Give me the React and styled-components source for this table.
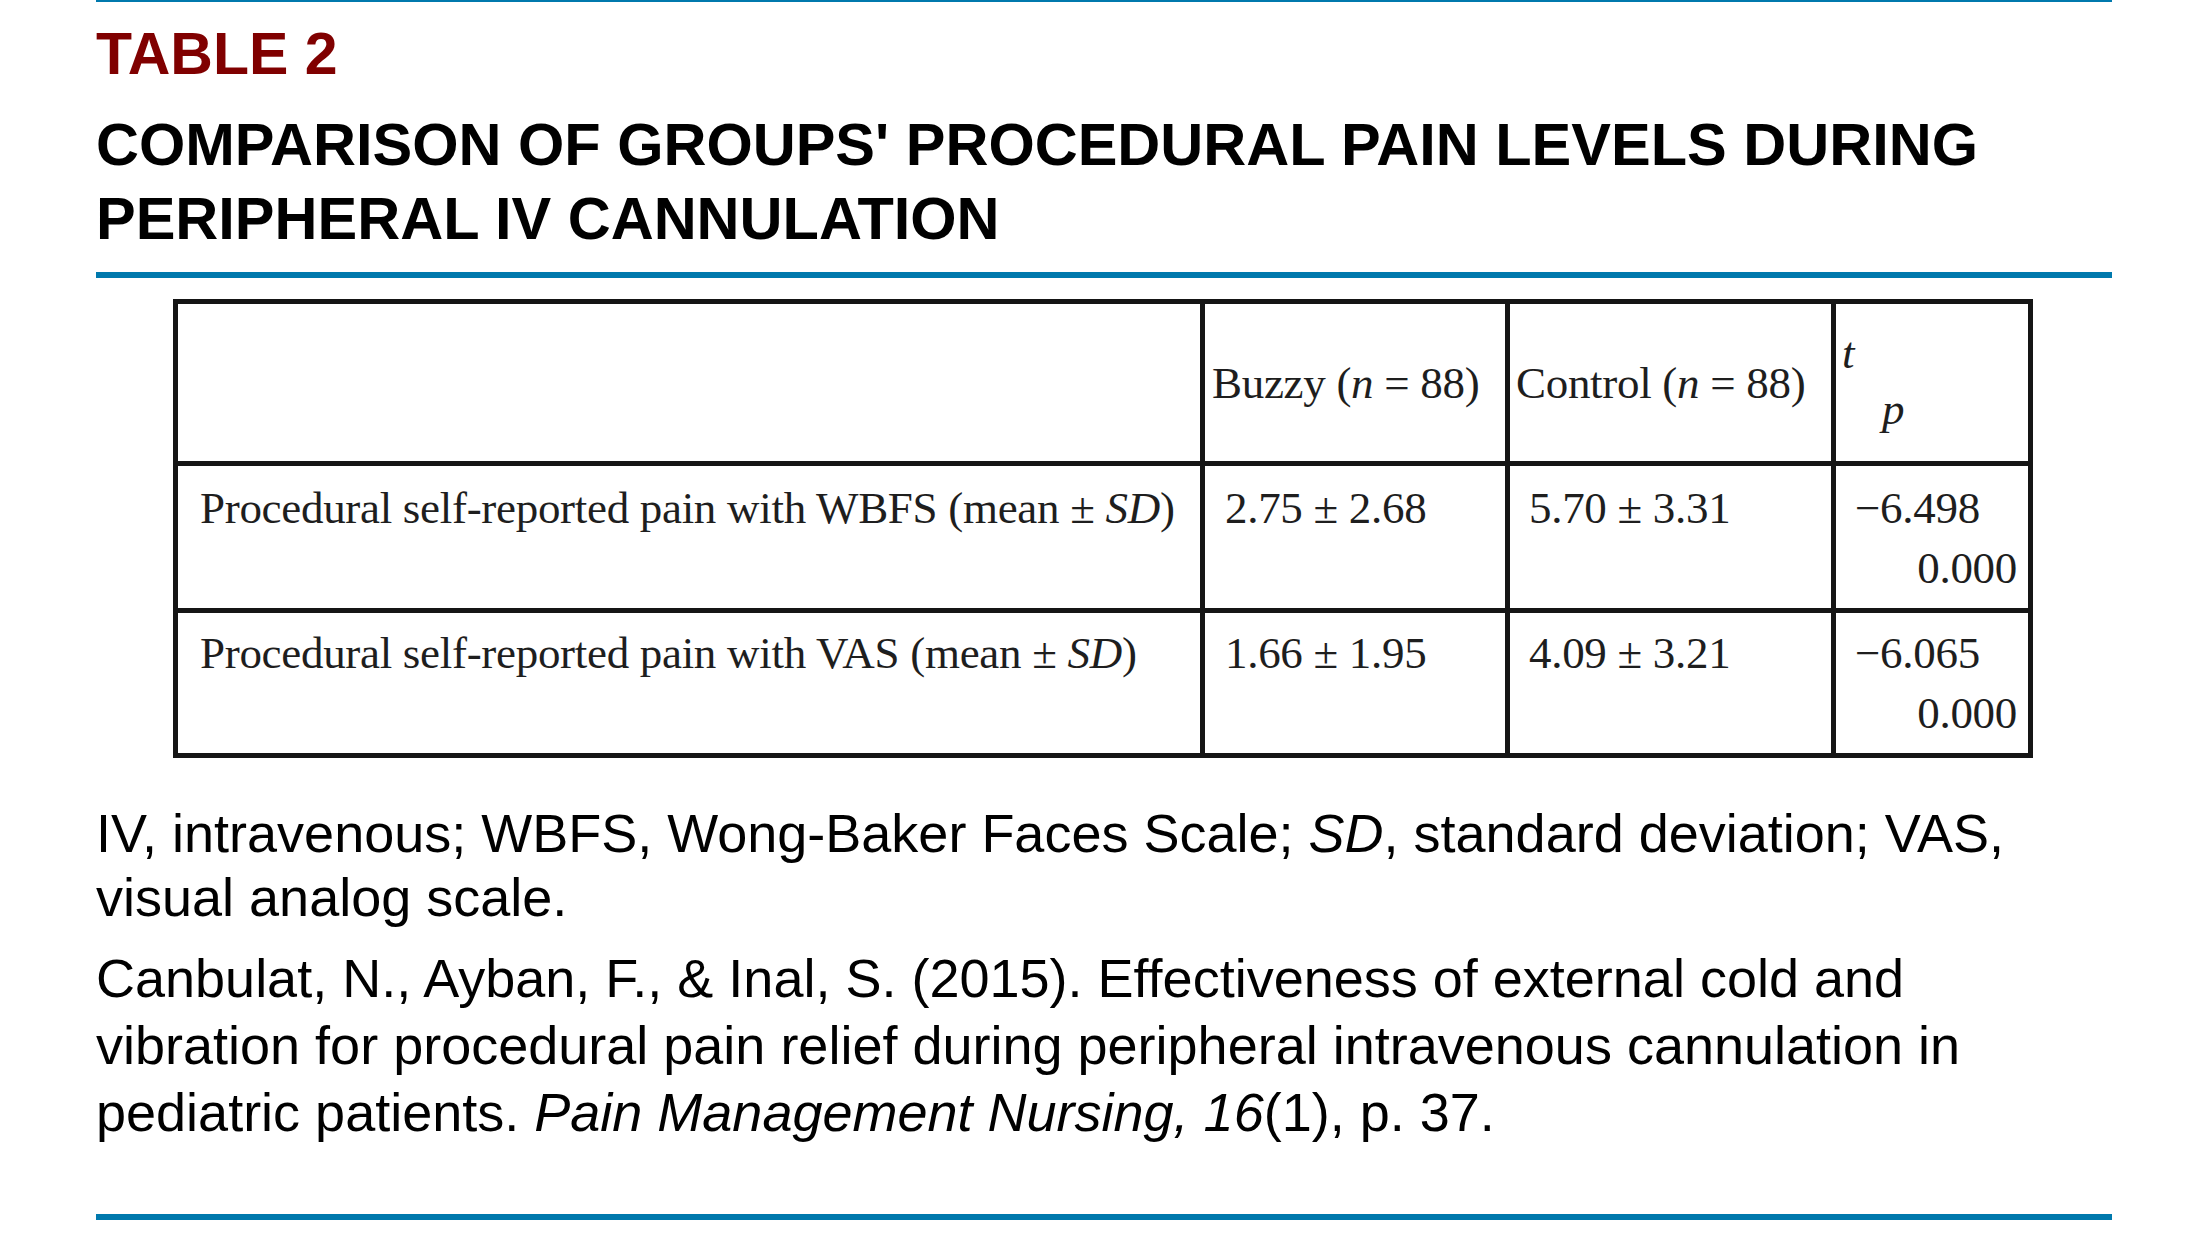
import React from "react";
import styled, { createGlobalStyle } from "styled-components";

const GlobalStyle = createGlobalStyle`
  html, body {
    margin: 0;
    padding: 0;
    background: #fff;
  }
  body {
    font-family: "Liberation Sans", Arial, sans-serif;
    color: #000;
  }
`;

const Page = styled.div`
  width: 2208px;
  height: 1242px;
  padding-left: 96px;
  box-sizing: border-box;
  overflow: hidden;
`;

const Panel = styled.div`
  width: 2016px;
  display: flex;
  flex-direction: column;
`;

const Rule = styled.div`
  height: ${(p) => p.thickness}px;
  margin-top: ${(p) => p.gap ?? 0}px;
  background-color: #0079ad;
  width: 100%;
`;

const Label = styled.div`
  margin-top: 23px;
  font-size: 59px;
  line-height: 59px;
  font-weight: 700;
  color: #800000;
`;

const Title = styled.h1`
  margin: 24px 0 16px;
  font-size: 59.5px;
  line-height: 74px;
  font-weight: 700;
  color: #000;
`;

const Table = styled.div`
  margin: 21px 0 0 77px;
  display: grid;
  grid-template-columns: 1027px 305px 326px 197px;
  grid-template-rows: 162px 147px 145px;
  width: 1860px;
  box-sizing: border-box;
  border-top: 5px solid #151515;
  border-left: 5px solid #151515;
  font-family: "Liberation Serif", "Times New Roman", serif;
  font-size: 45px;
  color: #1e1e1e;
`;

const Cell = styled.div`
  border-right: 5px solid #151515;
  border-bottom: 5px solid #151515;
  padding-top: ${(p) => p.top ?? 11}px;
  padding-left: ${(p) => p.left ?? 20}px;
  padding-right: 11px;
  line-height: ${(p) => p.lh ?? 60}px;
  white-space: nowrap;
  letter-spacing: -0.3px;
`;

const Line = styled.div`
  padding-left: ${(p) => p.indent ?? 0}px;
  text-align: ${(p) => p.align ?? "left"};
`;

const Notes = styled.p`
  margin: ${(p) => p.gap}px 0 0;
  font-size: 54px;
  line-height: ${(p) => p.lh}px;
  color: #000;
  white-space: nowrap;
`;

const rows = [
  {
    label: "WBFS",
    buzzy: "2.75 ± 2.68",
    control: "5.70 ± 3.31",
    t: "−6.498",
    p: "0.000",
    top: 12,
  },
  {
    label: "VAS",
    buzzy: "1.66 ± 1.95",
    control: "4.09 ± 3.21",
    t: "−6.065",
    p: "0.000",
    top: 10,
  },
];

export default function App() {
  return (
    <Page>
      <GlobalStyle />
      <Panel>
        <Rule thickness={2} />
        <Label>TABLE 2</Label>
        <Title>
          COMPARISON OF GROUPS' PROCEDURAL PAIN LEVELS DURING PERIPHERAL IV
          CANNULATION
        </Title>
        <Rule thickness={6} />

        <Table>
          <Cell />
          <Cell left={7} top={49}>
            Buzzy (<i>n</i> = 88)
          </Cell>
          <Cell left={6} top={49}>
            Control (<i>n</i> = 88)
          </Cell>
          <Cell left={6} top={21} lh={56}>
            <Line>
              <i>t</i>
            </Line>
            <Line indent={40}>
              <i>p</i>
            </Line>
          </Cell>

          {rows.map((row) => (
            <React.Fragment key={row.t}>
              <Cell left={22} top={row.top}>
                Procedural self-reported pain with {row.label} (mean ±{" "}
                <i>SD</i>)
              </Cell>
              <Cell left={20} top={row.top}>
                {row.buzzy}
              </Cell>
              <Cell left={19} top={row.top}>
                {row.control}
              </Cell>
              <Cell left={19} top={row.top}>
                <Line>{row.t}</Line>
                <Line align="right">{row.p}</Line>
              </Cell>
            </React.Fragment>
          ))}
        </Table>

        <Notes gap={43} lh={64}>
          IV, intravenous; WBFS, Wong-Baker Faces Scale; <i>SD</i>, standard
          deviation; VAS,
          <br />
          visual analog scale.
        </Notes>
        <Notes gap={16} lh={67}>
          Canbulat, N., Ayban, F., &amp; Inal, S. (2015). Effectiveness of
          external cold and
          <br />
          vibration for procedural pain relief during peripheral intravenous
          cannulation in
          <br />
          pediatric patients. <i>Pain Management Nursing, 16</i>(1), p. 37.
        </Notes>

        <Rule thickness={6} gap={68} />
      </Panel>
    </Page>
  );
}
